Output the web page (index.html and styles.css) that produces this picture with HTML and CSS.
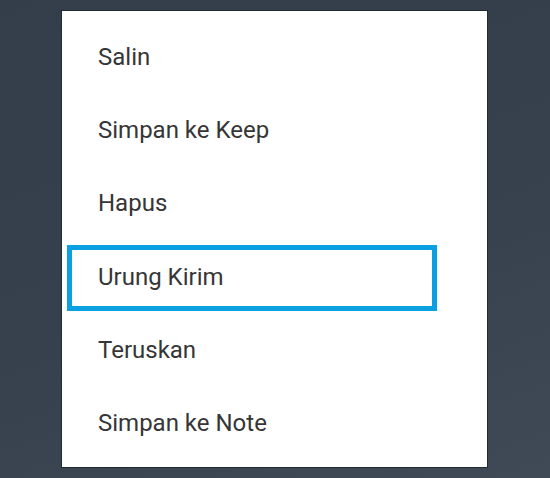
FILE: index.html
```html
<!DOCTYPE html>
<html lang="id">
<head>
  <meta charset="UTF-8">
  <meta name="viewport" content="width=device-width, initial-scale=1.0">
  <title>Menu Pesan</title>
  <link rel="stylesheet" href="styles.css">
</head>
<body>
  <div class="menu">
    <div class="item">Salin</div>
    <div class="item">Simpan ke Keep</div>
    <div class="item">Hapus</div>
    <div class="item highlight">Urung Kirim</div>
    <div class="item">Teruskan</div>
    <div class="item">Simpan ke Note</div>
  </div>
</body>
</html>
```

FILE: styles.css
```css
html, body {
  height: 100%;
}
body {
  margin: 0;
  font-family: Roboto, "Noto Sans", sans-serif;
  background: linear-gradient(160deg, #333e4a 0%, #36414d 55%, #3f4a56 100%);
  overflow: hidden;
}
.menu {
  position: relative;
  margin: 10px 0 0 61px;
  width: 427px;
  padding: 10px 0 8px;
  background: #fff;
  border: 1px solid #222a33;
  box-sizing: border-box;
  height: 458px;
}
.item {
  height: 73.2px;
  line-height: 73.2px;
  padding-left: 36px;
  font-size: 24px;
  color: #363636;
}
.highlight {
  position: relative;
}
.highlight::after {
  content: "";
  position: absolute;
  left: 5px;
  top: 4px;
  width: 370px;
  height: 66px;
  border: 5px solid #0aa0e2;
  box-sizing: border-box;
}
```
